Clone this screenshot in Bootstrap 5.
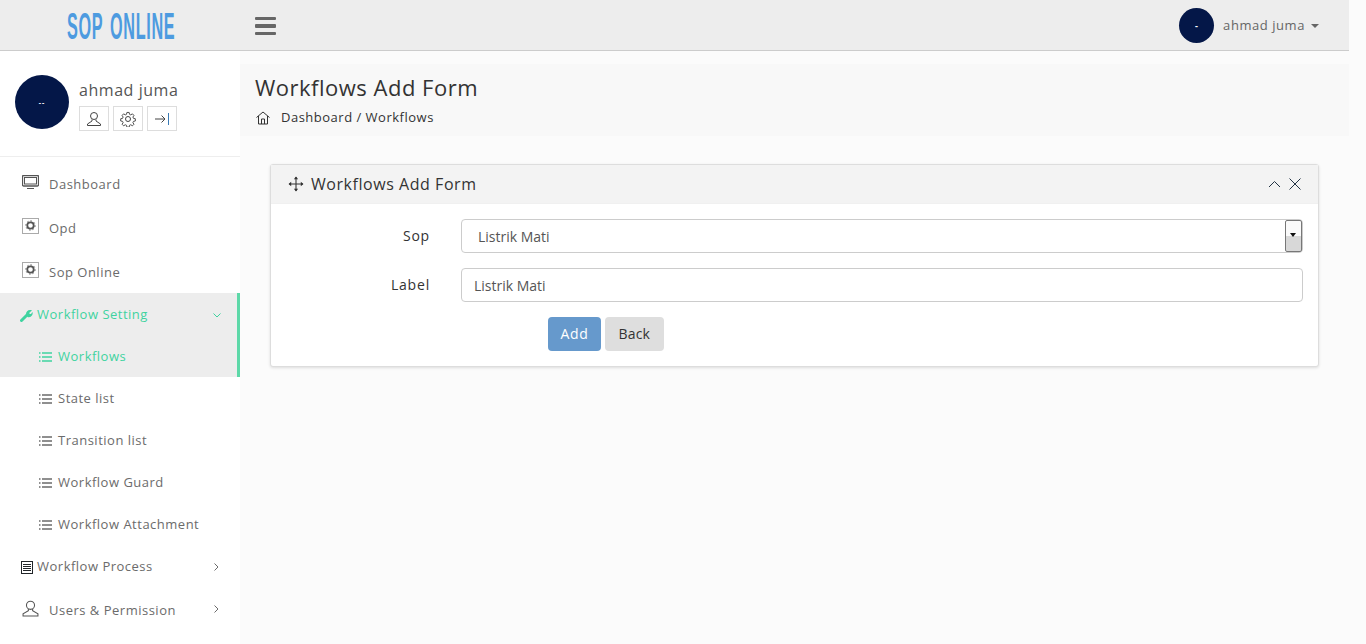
<!DOCTYPE html>
<html lang="en">
<head>
<title>Workflows Add Form</title>
<link href="https://cdn.jsdelivr.net/npm/bootstrap@5.3.3/dist/css/bootstrap.min.css" rel="stylesheet">
<script src="https://cdn.jsdelivr.net/npm/bootstrap@5.3.3/dist/js/bootstrap.bundle.min.js"></script>
<style>
html, body { height: 100%; overflow: hidden; }
body { font-family: "Open Sans", sans-serif; font-size: 13px; letter-spacing: .5px; background: #fbfbfb; color: #333; }
svg { display: block; flex: none; fill: none; stroke: currentColor; }
.app-shell { width: 1349px; height: 644px; background: #fbfbfb; }
.top-bar { height: 51px; background: #ededed; border-bottom: 1px solid #ccc; }
.logo-box { width: 240px; height: 50px; overflow: hidden; padding: 2px 0 0 2px; }
.logo-text { font-family: "Liberation Sans", sans-serif; font-weight: 700; font-size: 36px; line-height: 50px; letter-spacing: 1.5px; word-spacing: 4px; color: #4d9be0; transform: scaleX(.45); transform-origin: center; white-space: nowrap; }
.burger-btn { width: 21px; margin-left: 15px; margin-top: 2px; gap: 4px; }
.burger-btn span { height: 3.5px; background: #666; border-radius: 1px; }
.avatar-dot { background: #041748; color: #fff; border-radius: 50%; font-size: 9px; line-height: 1; font-weight: 700; }
.avatar-top { width: 35px; height: 35px; }
.avatar-big { width: 54px; height: 54px; font-size: 7px; letter-spacing: 1px; }
.user-top { color: #666; margin-left: 9px; margin-right: 30px; padding-top: 1px; letter-spacing: .56px; }
.caret-down { border-top: 4px solid #666; border-left: 4px solid transparent; border-right: 4px solid transparent; margin-left: 6px; }
.side-panel { width: 240px; height: 593px; background: #fff; flex: none; }
.profile-area { height: 106px; padding: 24px 15px 0; border-bottom: 1px solid #eee; gap: 10px; }
.profile-name { font-size: 16px; line-height: 22px; color: #555; margin-top: 4px; margin-bottom: 5px; letter-spacing: .55px; }
.tool-btn { width: 30px; height: 25px; border: 1px solid #ddd; color: #444; }
.menu-row { height: 44px; padding: 4px 21px 0 22px; color: #6b6b6b; }
.menu-row .row-label { margin-left: 10px; }
.row-icon { margin-top: -6px; color: #555; }
.menu-sub { height: 42px; padding: 2px 0 0 39px; color: #6b6b6b; }
.menu-sub svg { margin-right: 6px; }
.menu-group { background: #ededed; border-right: 3px solid #5dd8a8; color: #3fd3a0; height: 84px; }
.menu-group .menu-row, .menu-group .menu-sub { color: #3fd3a0; height: 42px; padding-top: 2px; padding-right: 16px; }
.menu-tall { height: 42px; padding-top: 2px; padding-left: 21px; }
.menu-arrow { margin-left: auto; }
.arrow-up { margin-top: -4px; }
.main-area { min-width: 0; }
.page-head { margin-top: 13px; height: 72px; background: #f8f8f8; padding: 9px 15px 0; }
.page-title { font-size: 22px; line-height: 28px; font-weight: 400; color: #333; margin: 0 0 7px; letter-spacing: .5px; }
.crumb-row { gap: 11px; color: #333; padding-left: 1px; }
.form-card { margin: 28px 30px 0; width: 1049px; height: 203px; border: 1px solid #ddd; border-radius: 3px; box-shadow: 0 1px 3px rgba(0,0,0,.12); background: #fff; }
.form-card-head { height: 39px; background: #f3f3f3; padding: 0 17px 0 17px; font-size: 16px; color: #333; border-bottom: 1px solid #f0f0f0; letter-spacing: .55px; }
.head-icon { margin-right: 7px; }
.head-tools { margin-left: auto; gap: 8px; color: #234; }
.form-body { padding-top: 15px; }
.form-line { height: 34px; margin-bottom: 15px; }
.form-label-cell { width: 159px; text-align: right; font-size: 14px; color: #333; flex: none; letter-spacing: .8px; margin-top: -1px; }
.field-cell { margin-left: 31px; width: 842px; position: relative; }
.field-box { height: 34px; border: 1px solid #ccc; border-radius: 4px; font-size: 14px; color: #555; padding: 0 12px; letter-spacing: 0; box-shadow: none; }
.field-select { padding-left: 12px; background-image: none; text-indent: 4px; }
.spin-btn { position: absolute; top: 1px; right: 1px; width: 17px; height: 32px; border: 1px solid #777; border-radius: 2px; background: linear-gradient(#fafafa 50%, #d8d8d8 50%); }
.spin-btn::after { content: ""; position: absolute; left: 4px; top: 12px; border-top: 4px solid #111; border-left: 3.5px solid transparent; border-right: 3.5px solid transparent; }
.btn-line { padding-left: 277px; gap: 4px; }
.btn-add, .btn-back { height: 34px; font-size: 14px; border: 0; border-radius: 4px; padding-bottom: 2px; padding-top: 0; }
.btn-add { background: #6699cc; color: #fff; padding-left: 12.5px; padding-right: 12.5px; letter-spacing: .65px; }
.btn-back { background: #dedede; color: #333; padding-left: 13.5px; padding-right: 13.5px; letter-spacing: .2px; }
</style>
</head>
<body>
<div class="app-shell">
  <header class="top-bar d-flex align-items-center">
    <div class="logo-box d-flex justify-content-center"><div class="logo-text">SOP ONLINE</div></div>
    <div class="burger-btn d-flex flex-column"><span></span><span></span><span></span></div>
    <div class="ms-auto d-flex align-items-center">
      <div class="avatar-dot avatar-top d-flex align-items-center justify-content-center">-</div>
      <span class="user-top d-flex align-items-center">ahmad juma<i class="caret-down"></i></span>
    </div>
  </header>
  <div class="d-flex">
    <aside class="side-panel">
      <div class="profile-area d-flex">
        <div class="avatar-dot avatar-big d-flex align-items-center justify-content-center">--</div>
        <div>
          <div class="profile-name">ahmad juma</div>
          <div class="d-flex gap-1">
            <div class="tool-btn d-flex align-items-center justify-content-center"><svg width="16" height="16" viewBox="0 0 16 16"><circle cx="8" cy="5" r="3.5"/><path d="M6 8.5v1.500L1.500 13v1.500h13V13L10 10V8.500"/></svg></div>
            <div class="tool-btn d-flex align-items-center justify-content-center"><svg width="16" height="16" viewBox="0 0 16 16"><circle cx="8" cy="8" r="2.500"/><path d="M6.800 1h2.400l.4 2 1.300.6 1.800-1.100 1.600 1.700-1.100 1.700.6 1.400 2 .4v2.400l-2 .4-.6 1.300 1.100 1.800-1.600 1.600-1.800-1.100-1.300.6-.4 2H6.800l-.4-2-1.300-.6-1.800 1.100-1.600-1.600 1.100-1.800-.6-1.300-2-.4V7.700l2-.4.6-1.400-1.100-1.700 1.600-1.700 1.800 1.100 1.300-.6z" transform="translate(.5 .5) scale(.94)"/></svg></div>
            <div class="tool-btn d-flex align-items-center justify-content-center"><svg width="15" height="12" viewBox="0 0 15 12"><path d="M0 6h10M6.500 2.500 10 6l-3.500 3.500"/><path d="M13.500 0v12" stroke="#3b7bb5"/></svg></div>
          </div>
        </div>
      </div>
      <nav class="mt-1">
        <div class="menu-row d-flex align-items-center">
          <svg class="row-icon" width="17" height="15" viewBox="0 0 17 15"><rect x=".5" y=".5" width="16" height="10.500" rx="1" stroke-width="1.300"/><rect x="2.500" y="2.500" width="12" height="6.500"/><path d="M5 13.500h7"/></svg>
          <span class="row-label">Dashboard</span>
        </div>
        <div class="menu-row d-flex align-items-center">
          <svg class="row-icon" width="17" height="16" viewBox="0 0 17 16"><rect x=".5" y=".5" width="16" height="15" stroke-dasharray="1 1"/><circle cx="8.500" cy="7.500" r="3.200" stroke-width="1.800"/><circle cx="8.500" cy="7.500" r="4.600" stroke-width="1" stroke-dasharray="1.500 2"/></svg>
          <span class="row-label">Opd</span>
        </div>
        <div class="menu-row d-flex align-items-center">
          <svg class="row-icon" width="17" height="16" viewBox="0 0 17 16"><rect x=".5" y=".5" width="16" height="15" stroke-dasharray="1 1"/><circle cx="8.500" cy="7.500" r="3.200" stroke-width="1.800"/><circle cx="8.500" cy="7.500" r="4.600" stroke-width="1" stroke-dasharray="1.500 2"/></svg>
          <span class="row-label">Sop Online</span>
        </div>
        <div class="menu-group">
          <div class="menu-row d-flex align-items-center ps-3">
            <svg class="ms-1" width="13" height="13" viewBox="0 0 13 13"><path d="M1.500 11.500 7 6" stroke-width="3" stroke-linecap="round"/><path d="M6 5c0-3 3-5 6-3.500L9.500 3.500v1.500h1.500L12.500 3c1 3-2 6-5 5z" fill="currentColor" stroke="none"/></svg>
            <span class="ms-1">Workflow Setting</span>
            <svg class="menu-arrow" width="8" height="5" viewBox="0 0 8 5"><path d="m.5.500 3.500 3.500L7.500.500"/></svg>
          </div>
          <div class="menu-sub d-flex align-items-center">
            <svg width="13" height="10" viewBox="0 0 13 10"><path d="M0 1h1.500M3 1h10M0 5h1.500M3 5h10M0 9h1.500M3 9h10" stroke-width="1.500"/></svg>
            <span>Workflows</span>
          </div>
        </div>
        <div class="menu-sub d-flex align-items-center"><svg width="13" height="10" viewBox="0 0 13 10"><path d="M0 1h1.500M3 1h10M0 5h1.500M3 5h10M0 9h1.500M3 9h10" stroke-width="1.500"/></svg><span>State list</span></div>
        <div class="menu-sub d-flex align-items-center"><svg width="13" height="10" viewBox="0 0 13 10"><path d="M0 1h1.500M3 1h10M0 5h1.500M3 5h10M0 9h1.500M3 9h10" stroke-width="1.500"/></svg><span>Transition list</span></div>
        <div class="menu-sub d-flex align-items-center"><svg width="13" height="10" viewBox="0 0 13 10"><path d="M0 1h1.500M3 1h10M0 5h1.500M3 5h10M0 9h1.500M3 9h10" stroke-width="1.500"/></svg><span>Workflow Guard</span></div>
        <div class="menu-sub d-flex align-items-center"><svg width="13" height="10" viewBox="0 0 13 10"><path d="M0 1h1.500M3 1h10M0 5h1.500M3 5h10M0 9h1.500M3 9h10" stroke-width="1.500"/></svg><span>Workflow Attachment</span></div>
        <div class="menu-row menu-tall d-flex align-items-center">
          <svg class="text-dark" width="12" height="13" viewBox="0 0 12 13"><rect x=".5" y=".5" width="11" height="12"/><path d="M2 3.500h8M2 5.500h8M2 7.500h8M2 9.500h8"/></svg>
          <span class="ms-1">Workflow Process</span>
          <svg class="menu-arrow" width="5" height="8" viewBox="0 0 5 8"><path d="m.5.500 3.500 3.500L.5 7.500"/></svg>
        </div>
        <div class="menu-row d-flex align-items-center">
          <svg class="row-icon" width="17" height="17" viewBox="0 0 16 16"><circle cx="8" cy="5" r="3.800"/><path d="M6 8.500v1.500L1 13v2h14v-2L10 10V8.500"/></svg>
          <span class="row-label">Users &amp; Permission</span>
          <svg class="menu-arrow arrow-up" width="5" height="8" viewBox="0 0 5 8"><path d="m.5.500 3.500 3.500L.5 7.500"/></svg>
        </div>
      </nav>
    </aside>
    <main class="main-area flex-grow-1">
      <div class="page-head">
        <h1 class="page-title">Workflows Add Form</h1>
        <div class="crumb-row d-flex align-items-center">
          <svg width="14" height="14" viewBox="0 0 14 14"><path d="M.5 6.500 7 1l6.500 5.500M2.500 5v8h9V5M5.500 13V8h3v5"/></svg>
          <span>Dashboard / Workflows</span>
        </div>
      </div>
      <section class="form-card">
        <div class="form-card-head d-flex align-items-center">
          <svg class="head-icon" width="16" height="16" viewBox="0 0 15 15"><path d="M7.500 1v13M1 7.500h13"/><path d="m5.500 3 2-2.500 2 2.500zM5.500 12l2 2.500 2-2.500zM3 5.500.5 7.500l2.500 2zM12 5.500l2.500 2-2.500 2z" fill="currentColor" stroke="none"/></svg>
          <span>Workflows Add Form</span>
          <div class="head-tools d-flex align-items-center">
            <svg width="13" height="8" viewBox="0 0 13 8"><path d="m1 7 5.500-5.500L12 7"/></svg>
            <svg width="12" height="12" viewBox="0 0 12 12"><path d="m.5.500 11 11M11.500.500l-11 11"/></svg>
          </div>
        </div>
        <form class="form-body">
          <div class="form-line d-flex align-items-center">
            <label class="form-label-cell">Sop</label>
            <div class="field-cell">
              <select class="form-select field-box field-select"><option>Listrik Mati</option></select>
              <span class="spin-btn"></span>
            </div>
          </div>
          <div class="form-line d-flex align-items-center">
            <label class="form-label-cell">Label</label>
            <div class="field-cell"><input class="form-control field-box" type="text" value="Listrik Mati"></div>
          </div>
          <div class="btn-line d-flex">
            <button type="button" class="btn btn-add">Add</button>
            <button type="button" class="btn btn-back">Back</button>
          </div>
        </form>
      </section>
    </main>
  </div>
</div>
</body>
</html>
